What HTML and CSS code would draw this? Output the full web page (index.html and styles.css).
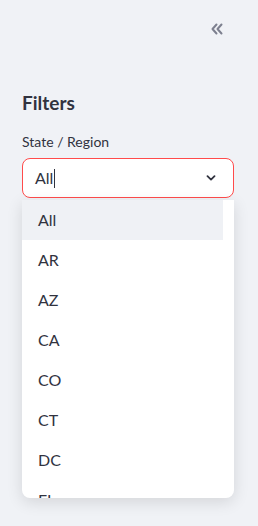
FILE: index.html
```html
<!DOCTYPE html>
<html lang="en">
<head>
    <meta charset="UTF-8">
    <meta name="viewport" content="width=device-width, initial-scale=1.0">
    <title>Filters</title>
    <link rel="stylesheet" href="styles.css">
</head>
<body>

<div class="sidebar">
    <div class="sidebar-top">
        <button class="collapse-btn" aria-label="Collapse sidebar">
            <svg width="16" height="16" viewBox="0 0 16 16" fill="none" stroke="#7d808f" stroke-width="2" stroke-linecap="round" stroke-linejoin="round">
                <path d="M7.5 3.5 L3.5 8 L7.5 12.5"/>
                <path d="M12.5 3.5 L8.5 8 L12.5 12.5"/>
            </svg>
        </button>
    </div>

    <h2 class="sidebar-title">Filters</h2>

    <div class="select-group">
        <label class="select-label">State / Region</label>
        <div class="select-wrap">
            <div class="select-box">
                <span class="select-value">All</span><span class="caret"></span>
                <svg class="chevron" width="10" height="6" viewBox="0 0 10 6" fill="none" stroke="#31333f" stroke-width="1.8" stroke-linecap="round" stroke-linejoin="round">
                    <path d="M1.5 1.2 L5 4.6 L8.5 1.2"/>
                </svg>
            </div>
            <ul class="dropdown">
                <li class="active">All</li>
                <li>AR</li>
                <li>AZ</li>
                <li>CA</li>
                <li>CO</li>
                <li>CT</li>
                <li>DC</li>
                <li>FL</li>
            </ul>
        </div>
    </div>
</div>

</body>
</html>
```

FILE: styles.css
```css
body {
    margin: 0;
    background-color: #f0f2f6;
    font-family: "Source Sans Pro", "Lato", "Noto Sans", sans-serif;
    color: #31333f;
}
.sidebar {
    width: 258px;
    height: 526px;
    box-sizing: border-box;
    padding: 0 24px 0 22px;
}
.sidebar-top {
    display: flex;
    justify-content: flex-end;
    padding-top: 21px;
    height: 38px;
}
.collapse-btn {
    background: none;
    border: none;
    padding: 0;
    margin-right: 8px;
    width: 18px;
    height: 18px;
    cursor: pointer;
}
.sidebar-title {
    margin: 30px 0 0;
    font-size: 19px;
    font-weight: 700;
    line-height: 28px;
}
.select-group {
    margin-top: 15px;
}
.select-label {
    display: block;
    font-size: 14px;
    line-height: 20px;
    margin-bottom: 6px;
}
.select-wrap {
    position: relative;
}
.select-box {
    display: flex;
    align-items: center;
    height: 40px;
    box-sizing: border-box;
    padding: 0 12px;
    background-color: #fff;
    border: 1px solid #ff4b4b;
    border-radius: 8px;
    font-size: 16px;
}
.select-value {
    line-height: 20px;
}
.caret {
    display: inline-block;
    width: 1px;
    height: 19px;
    background-color: #31333f;
    margin-left: 1px;
}
.chevron {
    margin-left: auto;
    margin-right: 5px;
}
.dropdown {
    position: absolute;
    top: 42px;
    left: 0;
    right: 0;
    height: 298px;
    overflow: hidden;
    margin: 0;
    padding: 0 11px 0 0;
    list-style: none;
    background-color: #fff;
    border-radius: 0 0 8px 8px;
    box-shadow: 0 4px 16px rgba(0, 0, 0, 0.12);
}
.dropdown li {
    height: 40px;
    line-height: 40px;
    padding-left: 16px;
    font-size: 16px;
}
.dropdown li.active {
    background-color: #eff1f5;
}
```
